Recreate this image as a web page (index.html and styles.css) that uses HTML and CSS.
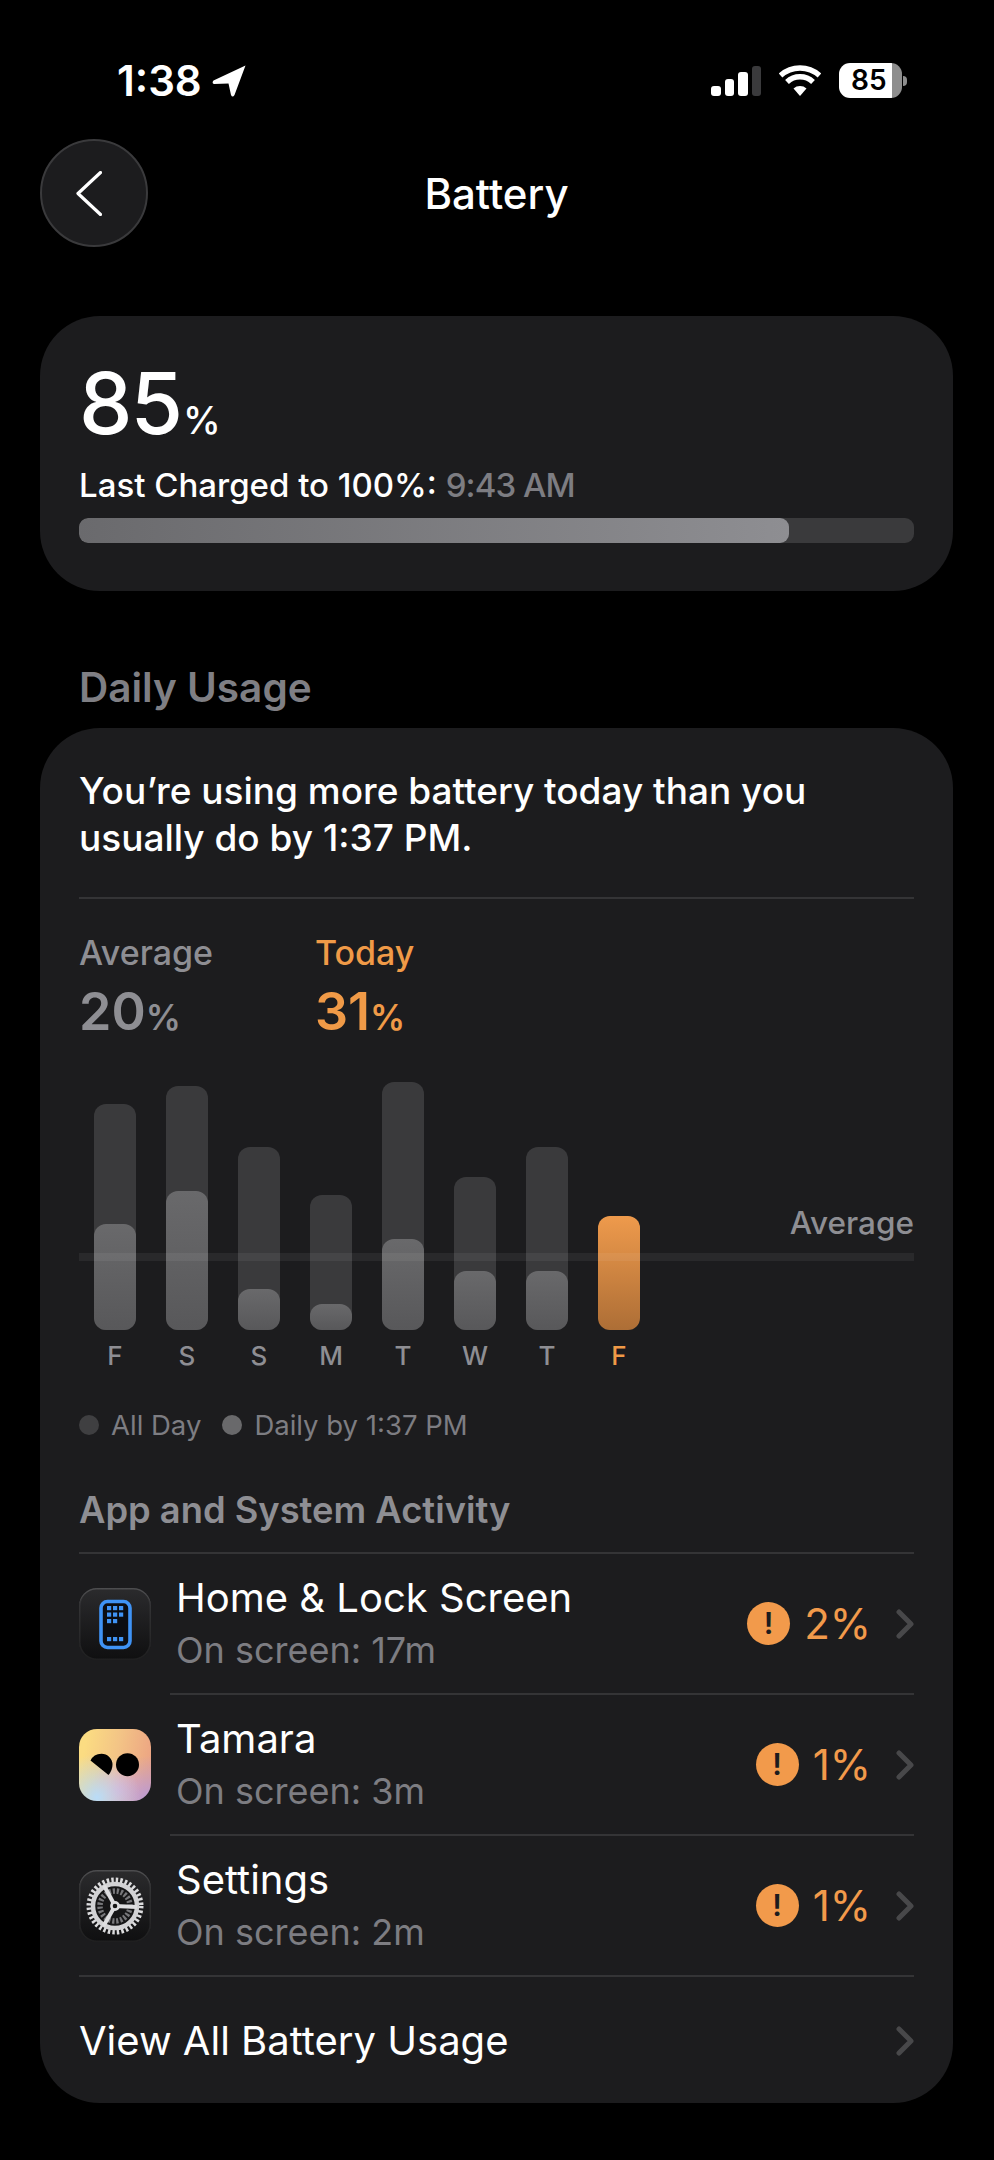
FILE: index.html
```html
<!DOCTYPE html>
<html lang="en">
<head>
<meta charset="utf-8">
<title>Battery</title>
<link rel="stylesheet" href="styles.css">
</head>
<body>
<div class="screen">
  <header class="status">
    <div class="status-left">
      <span class="clock">1:38</span>
      <svg class="loc" viewBox="0 0 34 32"><path d="M33.500 0.500 L22.500 30 Q20.500 33 19 30 L16.500 18.500 L2 19 Q-0.500 18 1.500 15.500 Z" fill="#fff"/></svg>
    </div>
    <div class="status-right">
      <div class="signal"><i class="s1"></i><i class="s2"></i><i class="s3"></i><i class="s4"></i></div>
      <svg class="wifi" viewBox="0 0 42 31"><path d="M21 31 L14.500 23.500 A10 10 0 0 1 27.500 23.500 Z" fill="#fff"/><path d="M1.500 10.500 A29 29 0 0 1 40.500 10.500 M8 17 A19 19 0 0 1 34 17" fill="none" stroke="#fff" stroke-width="5.500"/></svg>
      <div class="batt"><div class="batt-body"><span>85</span></div><div class="batt-tip"></div></div>
    </div>
  </header>

  <nav class="nav">
    <div class="back"><svg viewBox="0 0 26 45"><path d="M24.500 1.500 L2 22.500 L24.500 43.500" fill="none" stroke="#fff" stroke-width="3.200" stroke-linecap="round" stroke-linejoin="round"/></svg></div>
    <div class="title">Battery</div>
    <div></div>
  </nav>

  <section class="card level">
    <div class="big"><span class="num">85</span><span class="pct">%</span></div>
    <div class="charged">Last Charged to 100%: <span class="dim">9:43 AM</span></div>
    <div class="track"><div class="fill"></div></div>
  </section>

  <h2 class="heading">Daily Usage</h2>

  <section class="card usage">
    <p class="insight">You’re using more battery today than you usually do by 1:37 PM.</p>
    <div class="rule"></div>
    <div class="stats">
      <div class="stat avg"><div class="stat-label">Average</div><div class="stat-val"><span class="v">20</span><span class="p">%</span></div></div>
      <div class="stat today"><div class="stat-label">Today</div><div class="stat-val"><span class="v">31</span><span class="p">%</span></div></div>
    </div>

    <div class="chart">
      <div class="avg-line"></div>
      <div class="avg-tag">Average</div>
      <div class="cols">
        <div class="col"><div class="bar" style="height:226px"><div class="inner" style="height:106px"></div></div><span>F</span></div>
        <div class="col"><div class="bar" style="height:244px"><div class="inner" style="height:139px"></div></div><span>S</span></div>
        <div class="col"><div class="bar" style="height:183px"><div class="inner" style="height:41px"></div></div><span>S</span></div>
        <div class="col"><div class="bar" style="height:135px"><div class="inner" style="height:26px"></div></div><span>M</span></div>
        <div class="col"><div class="bar" style="height:248px"><div class="inner" style="height:91px"></div></div><span>T</span></div>
        <div class="col"><div class="bar" style="height:153px"><div class="inner" style="height:59px"></div></div><span>W</span></div>
        <div class="col"><div class="bar" style="height:183px"><div class="inner" style="height:59px"></div></div><span>T</span></div>
        <div class="col now"><div class="bar empty" style="height:114px"><div class="inner" style="height:114px"></div></div><span>F</span></div>
      </div>
    </div>

    <div class="legend">
      <span class="dot d1"></span><span class="leg">All Day</span>
      <span class="dot d2"></span><span class="leg">Daily by 1:37 PM</span>
    </div>

    <h3 class="sub-head">App and System Activity</h3>
    <div class="rule"></div>

    <div class="row">
      <div class="icon home">
        <svg viewBox="19 16 72 72"><rect x="41" y="29.500" width="29" height="46" rx="6.500" fill="#0b0d12" stroke="#3f93f5" stroke-width="3.600"/><g fill="#3f93f5"><rect x="47" y="34" width="4.200" height="4.200"/><rect x="53" y="34" width="4.200" height="4.200"/><rect x="59" y="34" width="4.200" height="4.200"/><rect x="47" y="40.500" width="4.200" height="4.200"/><rect x="53" y="40.500" width="4.200" height="4.200"/><rect x="59" y="40.500" width="4.200" height="4.200"/><rect x="47" y="47" width="4.200" height="4.200"/><rect x="53" y="47" width="4.200" height="4.200"/><rect x="47" y="65" width="4.200" height="4.200"/><rect x="53" y="65" width="4.200" height="4.200"/><rect x="59" y="65" width="4.200" height="4.200"/></g></svg>
      </div>
      <div class="row-text"><div class="row-title">Home &amp; Lock Screen</div><div class="row-sub">On screen: 17m</div></div>
      <div class="warn">!</div><div class="amount">2%</div>
      <svg class="chev" viewBox="0 0 18 30"><path d="M3 3 L15 15 L3 27" fill="none" stroke="#48484a" stroke-width="5" stroke-linecap="round" stroke-linejoin="round"/></svg>
    </div>
    <div class="rule inset"></div>

    <div class="row">
      <div class="icon tamara">
        <svg viewBox="19 17 72 72"><path d="M30.500 48.500 Q33.500 42 41.500 41.700 A11 11 0 0 1 52.500 52.700 Q52.500 58 48.500 63 Z" fill="#000"/><circle cx="67.500" cy="52.700" r="11.500" fill="#000"/></svg>
      </div>
      <div class="row-text"><div class="row-title">Tamara</div><div class="row-sub">On screen: 3m</div></div>
      <div class="warn">!</div><div class="amount">1%</div>
      <svg class="chev" viewBox="0 0 18 30"><path d="M3 3 L15 15 L3 27" fill="none" stroke="#48484a" stroke-width="5" stroke-linecap="round" stroke-linejoin="round"/></svg>
    </div>
    <div class="rule inset"></div>

    <div class="row">
      <div class="icon gear">
        <svg viewBox="0 0 72 72">
          <circle cx="36" cy="36" r="25.500" fill="none" stroke="#dcdcde" stroke-width="6" stroke-dasharray="2.400 2.050"/>
          <circle cx="36" cy="36" r="22" fill="#161617" stroke="#d2d2d4" stroke-width="4.500"/>
          <circle cx="36" cy="36" r="15" fill="none" stroke="#77777a" stroke-width="5.500" stroke-dasharray="2.200 1.800"/>
          <g stroke="#dedee0" stroke-width="4" fill="none"><path d="M36 36 L25 15.500"/><path d="M36 36 L58 37"/><path d="M36 36 L24.500 56"/></g>
          <circle cx="36" cy="36" r="3.600" fill="#161617" stroke="#dedee0" stroke-width="2.600"/>
        </svg>
      </div>
      <div class="row-text"><div class="row-title">Settings</div><div class="row-sub">On screen: 2m</div></div>
      <div class="warn">!</div><div class="amount">1%</div>
      <svg class="chev" viewBox="0 0 18 30"><path d="M3 3 L15 15 L3 27" fill="none" stroke="#48484a" stroke-width="5" stroke-linecap="round" stroke-linejoin="round"/></svg>
    </div>
    <div class="rule"></div>

    <div class="view-all">
      <span>View All Battery Usage</span>
      <svg class="chev" viewBox="0 0 18 30"><path d="M3 3 L15 15 L3 27" fill="none" stroke="#48484a" stroke-width="5" stroke-linecap="round" stroke-linejoin="round"/></svg>
    </div>
  </section>
</div>
</body>
</html>
```
FILE: styles.css
```css
* { box-sizing: border-box; }
html, body { margin: 0; padding: 0; background: #000; }
body { font-family: Inter, "Liberation Sans", sans-serif; color: #fff; }
.screen { width: 994px; height: 2160px; padding: 0 41px 0 40px; overflow: hidden; display: flex; flex-direction: column; }

.status { height: 139px; padding: 63px 46px 0 77px; display: flex; justify-content: space-between; align-items: flex-start; }
.status-left { display: flex; align-items: center; gap: 10px; height: 35px; }
.clock { font-size: 42px; font-weight: 600; line-height: 35px; letter-spacing: 0; }
.loc { width: 34px; height: 32px; }
.status-right { display: flex; align-items: flex-end; height: 35px; }
.signal { display: flex; align-items: flex-end; gap: 4px; height: 32px; margin: 0 18px 2px 0; }
.signal i { display: block; width: 9.500px; border-radius: 3px; background: #fff; }
.signal .s1 { height: 10px; }
.signal .s2 { height: 17px; }
.signal .s3 { height: 24px; }
.signal .s4 { height: 30px; background: #3a3a3c; }
.wifi { width: 42px; height: 31px; margin: 0 18px 2px 0; }
.batt { display: flex; align-items: center; height: 35px; gap: 1px; width: 68px; }
.batt-body { width: 63px; height: 35px; border-radius: 11px; background: linear-gradient(90deg, #fff 0 84%, #8e8e8e 84%); color: #000; font-size: 28px; font-weight: 600; line-height: 35px; padding-left: 12px; }
.batt-tip { width: 4px; height: 10px; border-radius: 0 4px 4px 0; background: #8e8e8e; }

.nav { display: grid; grid-template-columns: 108px 1fr 108px; align-items: center; height: 108px; }
.back { width: 108px; height: 108px; border-radius: 50%; background: #1c1c1e; border: 2px solid #3a3a3c; display: flex; align-items: center; justify-content: center; padding-right: 10px; }
.back svg { width: 26px; height: 45px; }
.title { text-align: center; font-size: 42px; font-weight: 500; line-height: 50px; padding-top: 2px; }

.card { background: #1c1c1e; border-radius: 60px; padding: 0 39px; }
.level { margin-top: 69px; height: 275px; padding-top: 46px; }
.big { height: 84px; line-height: 84px; display: flex; align-items: baseline; }
.num { font-size: 85px; font-weight: 500; letter-spacing: -2px; }
.pct { font-size: 38px; font-weight: 500; margin-left: 2px; }
.charged { margin-top: 19px; font-size: 33px; font-weight: 500; line-height: 40px; }
.dim { color: #7d7d82; letter-spacing: -.9px; }
.track { margin-top: 13px; height: 25px; border-radius: 9px; background: #3a3a3c; overflow: hidden; }
.fill { width: 85%; height: 100%; border-radius: 9px; background: linear-gradient(90deg, #6a6a6d, #8e8e92); }

.heading { margin: 74px 0 0 39px; height: 63px; font-size: 40.500px; line-height: 46px; font-weight: 600; color: #7f7f84; }

.usage { height: 1375px; padding-top: 39px; }
.insight { margin: 0; font-size: 37px; line-height: 47px; font-weight: 500; height: 94px; width: 760px; }
.rule { height: 2px; background: #343436; }
.insight + .rule { margin-top: 36px; }
.stats { display: flex; margin-top: 32px; height: 101px; }
.stat { width: 236px; }
.stat-label { font-size: 34px; line-height: 44px; font-weight: 500; }
.stat-val { line-height: 58px; margin-top: 8px; display: flex; align-items: baseline; }
.stat .v { font-size: 52px; font-weight: 600; }
.stat .p { font-size: 35px; font-weight: 600; margin-left: 0; }
.avg { color: #8e8e93; }
.today { color: #f09a47; }

.chart { position: relative; margin-top: 26px; height: 320px; }
.avg-line { position: absolute; left: 0; right: 0; top: 195px; height: 8px; background: rgba(255,255,255,.06); z-index: 2; }
.avg-tag { position: absolute; right: 0; top: 147px; font-size: 31.500px; line-height: 36px; font-weight: 500; color: #8e8e93; }
.cols { display: flex; gap: 30px; padding-left: 15px; align-items: flex-end; height: 320px; }
.col { width: 42px; display: flex; flex-direction: column; align-items: center; }
.col span { height: 40px; margin-top: 8px; line-height: 36px; font-size: 26px; font-weight: 500; color: #8e8e93; }
.bar { width: 42px; border-radius: 12px; background: #3a3a3c; display: flex; align-items: flex-end; }
.bar.empty { background: transparent; }
.inner { width: 100%; border-radius: 12px; background: linear-gradient(180deg, #69696b, #58585a); }
.now span { color: #f09a47; }
.now .inner { background: linear-gradient(180deg, #ee9a4c, #ad6e36); }

.legend { display: flex; align-items: center; margin-top: 27px; height: 40px; color: #7d7d82; font-size: 27.500px; }
.dot { width: 20px; height: 20px; border-radius: 50%; margin-right: 12px; }
.d1 { background: #3f3f41; }
.d2 { background: #69696b; margin-left: 21px; }

.sub-head { margin: 44px 0 0; height: 63px; line-height: 42px; font-size: 36.300px; font-weight: 600; color: #8e8e93; }

.row { height: 139px; display: flex; align-items: center; }
.icon { width: 72px; height: 72px; border-radius: 18px; flex: none; overflow: hidden; }
.icon svg { display: block; width: 72px; height: 72px; }
.home, .gear { background: linear-gradient(180deg, #2b2b2d, #0f0f10); box-shadow: inset 0 0 0 1.500px rgba(255,255,255,.07), inset 0 1.500px 0 rgba(255,255,255,.1); }
.tamara { background: radial-gradient(circle at 25% 95%, #b9dcf8 0, rgba(185,220,248,0) 50%), radial-gradient(circle at 100% 100%, #b79bdc 0, rgba(183,155,220,0) 45%), radial-gradient(circle at 55% 85%, #f2a7bb 0, rgba(242,167,187,0) 40%), linear-gradient(100deg, #fbdc82 10%, #f3c486 50%, #eb9e82 100%); }
.row-text { flex: 1; margin-left: 25px; }
.row-title { font-size: 40px; line-height: 50px; }
.row-sub { margin-top: 2px; font-size: 36px; line-height: 50px; color: #7d7d82; }
.warn { width: 43px; height: 43px; border-radius: 50%; background: #f29a4b; color: #1c1c1e; font-size: 30px; font-weight: 600; line-height: 43px; text-align: center; }
.amount { margin-left: 14px; font-size: 42px; color: #f29a4b; line-height: 50px; }
.chev { width: 18px; height: 30px; margin-left: 25px; flex: none; }
.inset { margin-left: 91px; }
.view-all { display: flex; justify-content: space-between; align-items: center; height: 129px; font-size: 40px; padding-bottom: 2px; }
```
